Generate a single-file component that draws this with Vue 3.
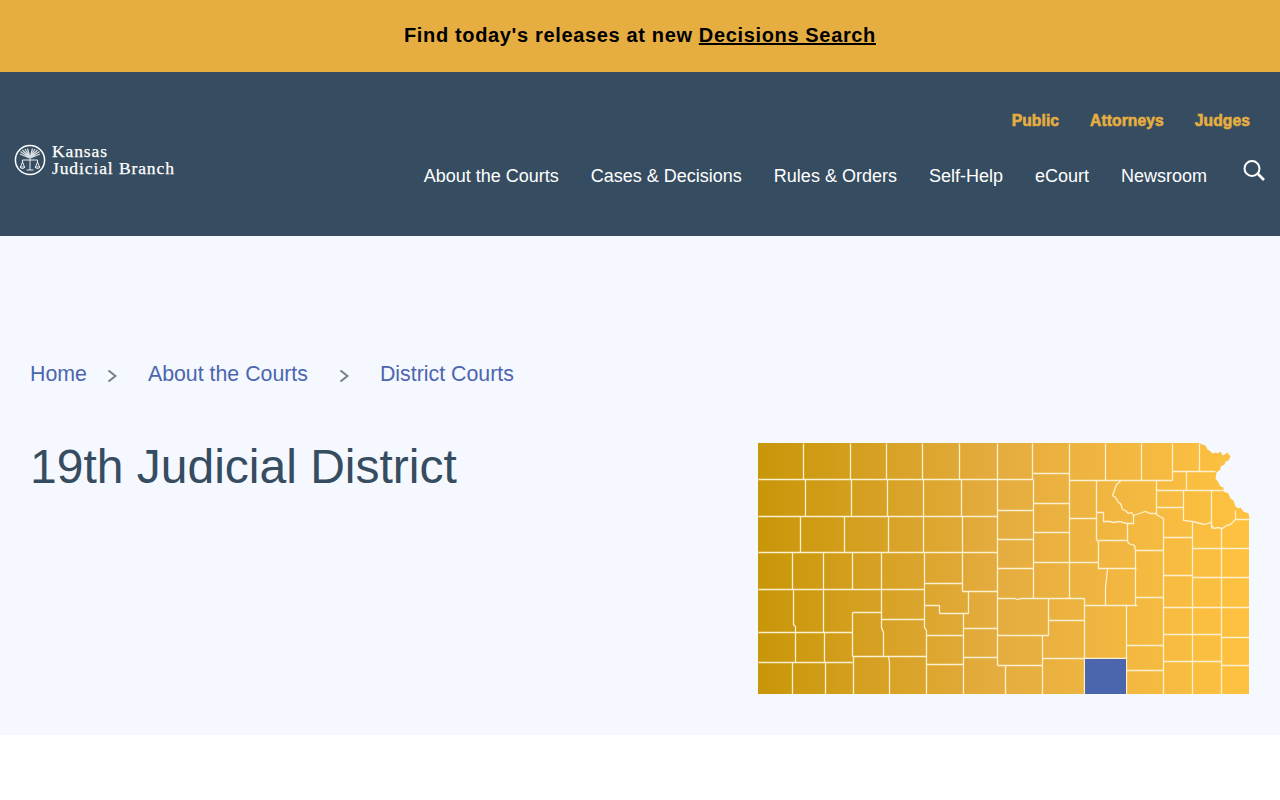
<template>
  <div class="banner">
    <p>Find today's releases at new <a href="#">Decisions Search</a></p>
  </div>

  <header class="site-header">
    <a class="logo" href="#">
      <svg class="seal" width="32" height="32" viewBox="0 0 32 32" fill="none">
        <circle cx="16" cy="16" r="14.6" stroke="#fff" stroke-width="1.5" />
        <path d="M15.500 14 L6 10 M15.500 13.500 L6.500 7.500 M15.500 13 L8.500 6 M15.500 12.500 L11 5 M15.500 12 L13.500 4.500 M16.500 14 L26 10 M16.500 13.500 L25.500 7.500 M16.500 13 L23.500 6 M16.500 12.500 L21 5 M16.500 12 L18.500 4.500" stroke="#d5dbe0" stroke-width="1.300" />
        <path d="M16 12 V26 M12.500 26 H19.500 M8.500 16 H23.500 M8.500 16 V18 L6.500 23 M8.500 18 L10.500 23 M23.500 16 V18 L21.500 23 M23.500 18 L25.500 23 M6 23 C7 25 10 25 11 23 Z M21 23 C22 25 25 25 26 23 Z" stroke="#fff" stroke-width="0.900" />
      </svg>
      <span class="logo-text">Kansas<br />Judicial Branch</span>
    </a>

    <div class="header-right">
      <nav class="audience">
        <a v-for="item in audience" :key="item" href="#">{{ item }}</a>
      </nav>
      <div class="main-row">
        <nav class="main-nav">
          <a v-for="item in mainNav" :key="item" href="#">{{ item }}</a>
        </nav>
        <svg class="search" width="24" height="24" viewBox="0 0 24 24" fill="none">
          <circle cx="10" cy="9.500" r="7.500" stroke="#fff" stroke-width="2" />
          <path d="M15.500 14.500 L22 21" stroke="#fff" stroke-width="2.600" />
        </svg>
      </div>
    </div>
  </header>

  <section class="hero">
    <nav class="crumbs">
      <template v-for="(item, i) in crumbs" :key="item">
        <a href="#">{{ item }}</a>
        <svg v-if="i < crumbs.length - 1" class="chevron" width="10" height="14" viewBox="0 0 10 14" fill="none">
          <path d="M1.500 1.500 L8.500 7 L1.500 12.500" stroke="#777d8a" stroke-width="2" />
        </svg>
      </template>
    </nav>

    <div class="hero-row">
      <h1>19th Judicial District</h1>
      <svg class="map" width="492" height="251" viewBox="757.5 442.5 492 251">
        <defs>
          <linearGradient id="kansas" x1="0" y1="0" x2="1" y2="0">
            <stop offset="0" stop-color="#c89608" />
            <stop offset="0.5" stop-color="#e5ad40" />
            <stop offset="1" stop-color="#ffc240" />
          </linearGradient>
          <clipPath id="state">
            <path :d="outline" />
          </clipPath>
        </defs>
        <path :d="outline" fill="url(#kansas)" />
        <path :d="lines" fill="none" stroke="#fdf0cf" stroke-width="1.300" clip-path="url(#state)" />
        <rect x="1084.500" y="658.500" width="41" height="35" fill="#4c66ae" />
      </svg>
    </div>
  </section>
</template>

<script setup>
const audience = ['Public', 'Attorneys', 'Judges']
const mainNav = ['About the Courts', 'Cases & Decisions', 'Rules & Orders', 'Self-Help', 'eCourt', 'Newsroom']
const crumbs = ['Home', 'About the Courts', 'District Courts']

// state outline, traced from the river edge on the north east corner
const outline = 'M757.5 442.5 H1199 L1202 444 L1205 445 L1207 449 L1209 450 L1212 453 L1215 452 L1217 453 L1220 451 L1222 455 L1224 454 L1227 452 L1230 456 L1228 460 L1225 461 L1224 464 L1220 466 L1220 469 L1216 472 L1215 478 L1218 482 L1220 486 L1223 487 L1223 491 L1228 493 L1230 498 L1233 500 L1235 506 L1238 508 L1240 507 L1243 511 L1248 513 L1249 517 L1248.5 519 V693.5 H757.5 Z'

const lines = [
  // west half, top rows
  'M803 443 V479 M850 443 V479 M886 443 V479 M922 443 V479 M959 443 V479 M997 443 V665',
  'M758 479 H1033',
  'M805 479 V516 M851 479 V516 M887 479 V516 M923 479 V516 M961 479 V516',
  'M758 516 H997',
  'M800 516 V552 M844 516 V552 M888 516 V552 M923 516 V552 M962 516 V552',
  'M758 552 H997',
  'M792 552 V589 M823 552 V589 M852 552 V589 M881 552 V589 M924 552 V627 L926 630 V694 M962 552 V591',
  'M758 589 H924 M962 591 H997 M968 591 V613 M924 583 H962 M939 613 H968 M939 605 V613 M924 605 H939',
  'M963 613 V694 M963 628 H997 M926 635 H963 M926 664 H963 M963 657 H997 M997 665 H1042 M1005 665 V694',
  'M793 589 V624 L795 626 V662 M823 589 V632 M824 632 V662 M758 632 H852 M758 662 H852',
  'M852 612 H881 M852 612 V656 M881 589 V627 L883 632 V656 M881 619 H924 M852 656 H926',
  'M792 662 V694 M825 662 V694 M853 656 V694 M888 656 L889 662 V694',
  // middle
  'M997 510 H1033 M997 539 H1033 M997 568 H1033 M997 598 H1014 L1017 599 L1020 598 H1084 M997 635 H1048',
  'M1032 443 V479 M1033 479 V598 M1033 473 H1069 M1033 503 H1069 M1033 532 H1069 M1033 562 H1098',
  'M1069 443 V598 M1105 443 V480 M1141 443 V480 M1172 443 V480 M1069 480 H1172',
  'M1048 598 V635 M1048 620 H1084 M1042 635 V694 M1042 658 H1126 M1084 598 V694 M1126 605 V694 M1084 605 H1137',
  'M1096 480 V539 L1098 542 V568 H1136 M1069 518 H1096 M1098 540 H1127 L1128 543 L1134 545 L1135 550 V605 M1135 550 H1163',
  'M1107 569 L1105 587 V605 M1096 512 H1103 V521 L1109 521 L1113 522 L1119 521 L1127 523 V540 M1127 523 H1133 V515',
  'M1120 481 L1116 484 L1112 495 L1115 497 L1118 502 L1120 503 L1122 509 L1125 510 L1128 513 L1131 512 L1133 515 L1139 513 L1145 511 L1150 513 L1155 513 L1159 516 L1163 518 V694',
  'M1135 597 H1163 M1126 645 H1163 M1126 670 H1163',
  // east side
  'M1172 471 V480 M1172 471 H1215 M1199 443 V471 M1186 471 V490 M1156 490 H1223 M1156 480 V515 M1157 507 H1183',
  'M1183 490 V520 L1192 521 L1196 522 L1200 523 L1204 524 L1210 522 L1213 528 L1217 527 L1222 528 L1226 525 L1230 524 L1235 519 H1249 M1235 510 V519 M1211 490 V528',
  'M1192 521 V694 M1221 528 V694 M1163 537 H1192 M1192 548 H1249 M1163 575 H1192 M1192 577 H1249',
  'M1163 607 H1249 M1163 634 H1221 M1221 637 H1249 M1163 661 H1221 M1221 665 H1249',
].join(' ')
</script>

<style>
body {
  background: #fff;
}
</style>

<style scoped>
a {
  text-decoration: none;
  color: inherit;
}

.banner {
  height: 72px;
  box-sizing: border-box;
  padding-bottom: 2px;
  background: #e6ae40;
  display: flex;
  align-items: center;
  justify-content: center;
  font-family: "Liberation Sans", Arial, sans-serif;
  font-size: 20px;
  font-weight: 700;
  letter-spacing: 0.65px;
  color: #000;
}

.banner p {
  margin: 0;
}

.banner a {
  text-decoration: underline;
}

.site-header {
  height: 164px;
  background: #364c60;
  box-sizing: border-box;
  padding: 0 14px;
  display: flex;
  justify-content: space-between;
  align-items: center;
}

.logo {
  display: flex;
  align-items: center;
  gap: 6px;
  margin-top: 12px;
  color: #fff;
}

.seal {
  flex: none;
}

.logo-text {
  font-family: "Liberation Serif", "Times New Roman", serif;
  font-size: 17.5px;
  line-height: 17.5px;
  letter-spacing: 0.9px;
  -webkit-text-stroke: 0.25px #fff;
}

.header-right {
  display: flex;
  flex-direction: column;
  align-items: flex-end;
  gap: 36px;
  margin-bottom: 9px;
}

.audience {
  display: flex;
  gap: 31px;
  padding-right: 16px;
  font-family: "Liberation Sans", Arial, sans-serif;
  font-size: 15.6px;
  font-weight: 700;
  letter-spacing: 0.1px;
  -webkit-text-stroke: 0.6px #e6ae40;
  line-height: 16px;
  color: #e6ae40;
}

.main-row {
  display: flex;
  align-items: center;
}

.main-nav {
  display: flex;
  gap: 32px;
  font-family: "Liberation Sans", Arial, sans-serif;
  font-size: 18px;
  line-height: 22px;
  color: #fff;
}

.search {
  margin-left: 35px;
  margin-top: -10px;
}

.hero {
  height: 499px;
  box-sizing: border-box;
  background: #f5f8fe;
  padding: 125px 30px 0 30px;
  font-family: "Liberation Sans", Arial, sans-serif;
}

.crumbs {
  display: flex;
  align-items: center;
  height: 26px;
  font-size: 21.33px;
  color: #4c66ae;
}

.chevron {
  margin: 4px 31px 0;
}

.chevron:first-of-type {
  margin-left: 20px;
}

.hero-row {
  display: flex;
  justify-content: space-between;
  align-items: flex-start;
  margin-top: 56px;
}

h1 {
  margin: 0;
  font-size: 48px;
  font-weight: 400;
  line-height: 48px;
  color: #364c60;
}

.map {
  display: block;
}
</style>
